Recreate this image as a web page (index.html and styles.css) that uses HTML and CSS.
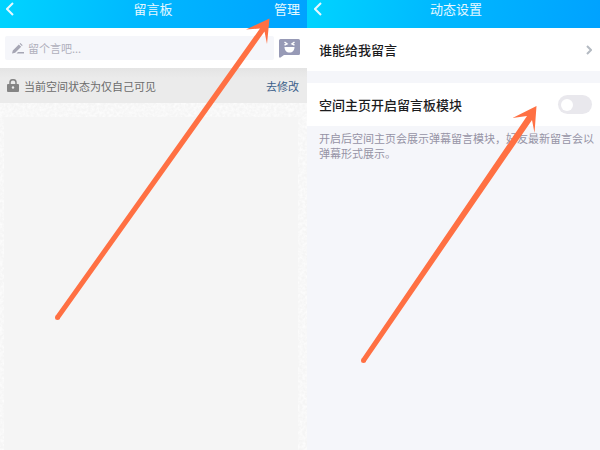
FILE: index.html
```html
<!DOCTYPE html>
<html lang="zh-CN">

<head>
    <meta charset="UTF-8">
    <meta name="viewport" content="width=device-width, initial-scale=1.0">
    <title>留言板</title>
    <link rel="stylesheet" href="styles.css">
</head>

<body>
    <main class="screens">
        <!-- Message board -->
        <section class="screen board">
            <header class="topbar">
                <button class="back" type="button" aria-label="返回">
                    <svg width="8" height="14" viewBox="0 0 8 14"><path d="M7 1L1 7l6 6" /></svg>
                </button>
                <h1>留言板</h1>
                <button class="manage" type="button">管理</button>
            </header>

            <div class="compose">
                <label class="field">
                    <svg width="12" height="11" viewBox="0 0 12 11">
                        <path d="M0 10.500l.8-3L6.800 1.500l2.400 2.200-6 6zM7.600.8l.8-.8 2.300 2.200-.8.800zM6 9H12v1.500H4.500z" />
                    </svg>
                    <input type="text" placeholder="留个言吧..." aria-label="留言">
                </label>
                <button class="emoji" type="button" aria-label="表情">
                    <svg width="21" height="19" viewBox="0 0 21 19">
                        <path fill="#979ab6" d="M1.500 0h18Q21 0 21 1.500v13q0 1.500-1.500 1.500H5l-3.500 2.500Q0 19 0 17.500v-16Q0 0 1.500 0z" />
                        <path fill="#fff" d="M5.500 8h10c0 3.500-2 5.500-5 5.500s-5-2-5-5.500z" />
                        <path fill="none" stroke="#fff" stroke-width="1.500" d="M5.500 3l2.500 1.800L5.500 6.200M15.500 3L13 4.800l2.500 1.400" />
                    </svg>
                </button>
            </div>

            <div class="notice">
                <svg width="12" height="13" viewBox="0 0 12 13">
                    <path fill="none" stroke="#858585" stroke-width="1.500" d="M3 6V3.500a3 2.800 0 0 1 6 0V6" />
                    <rect fill="#858585" y="5" width="12" height="8" rx="1" />
                    <circle fill="#ededed" cx="6" cy="8.500" r="1.200" />
                </svg>
                <span>当前空间状态为仅自己可见</span>
                <a href="#">去修改</a>
            </div>

            <div class="paper">
                <svg class="grain" aria-hidden="true">
                    <filter id="grain">
                        <feTurbulence type="fractalNoise" baseFrequency="0.35" numOctaves="2" />
                        <feColorMatrix values="0 0 0 0 1  0 0 0 0 1  0 0 0 0 1  2 0 0 0 -0.600" />
                    </filter>
                    <rect width="100%" height="100%" filter="url(#grain)" />
                </svg>
                <div class="sheet"></div>
            </div>
        </section>

        <!-- Feed settings -->
        <section class="screen settings">
            <header class="topbar">
                <button class="back" type="button" aria-label="返回">
                    <svg width="8" height="14" viewBox="0 0 8 14"><path d="M7 1L1 7l6 6" /></svg>
                </button>
                <h1>动态设置</h1>
            </header>

            <a class="row" href="#">
                <span>谁能给我留言</span>
                <svg width="6" height="10" viewBox="0 0 6 10"><path d="M1 1l4 4-4 4" /></svg>
            </a>
            <label class="row">
                <span>空间主页开启留言板模块</span>
                <input class="switch" type="checkbox">
            </label>
            <p class="hint">开启后空间主页会展示弹幕留言模块，好友最新留言会以弹幕形式展示。</p>
        </section>

        <!-- Pointer arrows -->
        <svg class="arrows" viewBox="0 0 600 450" preserveAspectRatio="none" aria-hidden="true">
            <circle cx="57.500" cy="317.500" r="2.500" />
            <path d="M55.500 316L260 28.500 246 29.500 269.500 18.500 267 44 264.500 31.500 59.500 319z" />
            <circle cx="363.500" cy="360.500" r="2.500" />
            <path d="M361.500 359L527 116 512.500 118 536.500 106 534.500 133 532 120 365.500 362z" />
        </svg>
    </main>
</body>

</html>
```
FILE: styles.css
```css
* {
    box-sizing: border-box;
}

body {
    margin: 0;
    font-family: "Noto Sans CJK SC", sans-serif;
    font-size: 13px;
    line-height: 18px;
    color: #1c1c1e;
}

button {
    padding: 0;
    border: 0;
    background: none;
    font: inherit;
    color: inherit;
    cursor: pointer;
}

a {
    color: inherit;
    text-decoration: none;
}

svg {
    display: block;
    flex: none;
}

.screens {
    position: relative;
    display: grid;
    grid-template-columns: 307fr 293fr;
    min-height: 100vh;
}

.screen {
    display: flex;
    flex-direction: column;
    min-width: 0;
}

.topbar {
    display: grid;
    grid-template-columns: 1fr auto 1fr;
    align-items: start;
    height: 28px;
    padding: 0 7px 0 6px;
    background: linear-gradient(100deg, #00d4ff, #00b8ff 45%, #00a2ff);
    color: #e6f8ff;
}

.settings .topbar {
    padding: 0 2px 0 7px;
}

.topbar h1 {
    margin: 0;
    font-size: 13px;
    font-weight: 400;
}

.back {
    justify-self: start;
    padding-top: 2px;
}

.back path {
    fill: none;
    stroke: #e6f8ff;
    stroke-width: 2;
}

.manage {
    justify-self: end;
}

/* Message board */
.board {
    background: #fff;
}

.compose {
    display: flex;
    align-items: center;
    gap: 5px;
    height: 40px;
    padding: 0 7px 0 5px;
}

.field {
    display: flex;
    flex: 1;
    align-items: center;
    gap: 4px;
    height: 24px;
    padding: 0 7px;
    border-radius: 2px;
    background: #f5f6fa;
}

.field path {
    fill: #a6a6b4;
}

.field input {
    flex: 1;
    min-width: 0;
    padding: 0;
    border: 0;
    outline: 0;
    background: none;
    font: inherit;
    font-size: 11px;
}

.field input::placeholder {
    color: #b0b0bc;
}

.notice {
    display: flex;
    align-items: center;
    gap: 5px;
    height: 35px;
    padding: 0 8px 0 7px;
    background: linear-gradient(#e4e4e4, #ebebeb 10px);
    font-size: 11px;
    color: #6c6c6c;
}

.notice a {
    margin-left: auto;
    color: #3b5f8a;
}

.paper {
    position: relative;
    display: flex;
    flex: 1;
    padding: 14px 9px 0 4px;
    background: #f5f5f5;
}

.grain {
    position: absolute;
    inset: 0;
    width: 100%;
    height: 100%;
    opacity: 0.7;
}

.sheet {
    position: relative;
    flex: 1;
    background: #f5f5f5;
}

/* Settings */
.settings {
    background: #f5f6fa;
}

.row {
    display: flex;
    align-items: center;
    justify-content: space-between;
    height: 43px;
    padding: 0 8px 0 12px;
    background: #fff;
    font-weight: 500;
}

.row + .row {
    margin-top: 12px;
}

.row path {
    fill: none;
    stroke: #b4bac2;
    stroke-width: 2;
}

.switch {
    display: flex;
    align-items: center;
    width: 34px;
    height: 19px;
    margin: 0;
    padding: 0 3px;
    border-radius: 10px;
    appearance: none;
    background: #e9e8ed;
}

.switch::before {
    width: 12px;
    height: 12px;
    border-radius: 50%;
    background: #fff;
    content: "";
}

.switch:checked {
    justify-content: flex-end;
    background: #00b8ff;
}

.hint {
    margin: 0;
    padding: 5px 4px 0 12px;
    font-size: 11px;
    line-height: 15px;
    color: #9593a5;
}

.arrows {
    position: absolute;
    inset: 0;
    width: 100%;
    height: 100%;
    fill: #ff7043;
    pointer-events: none;
}
```
